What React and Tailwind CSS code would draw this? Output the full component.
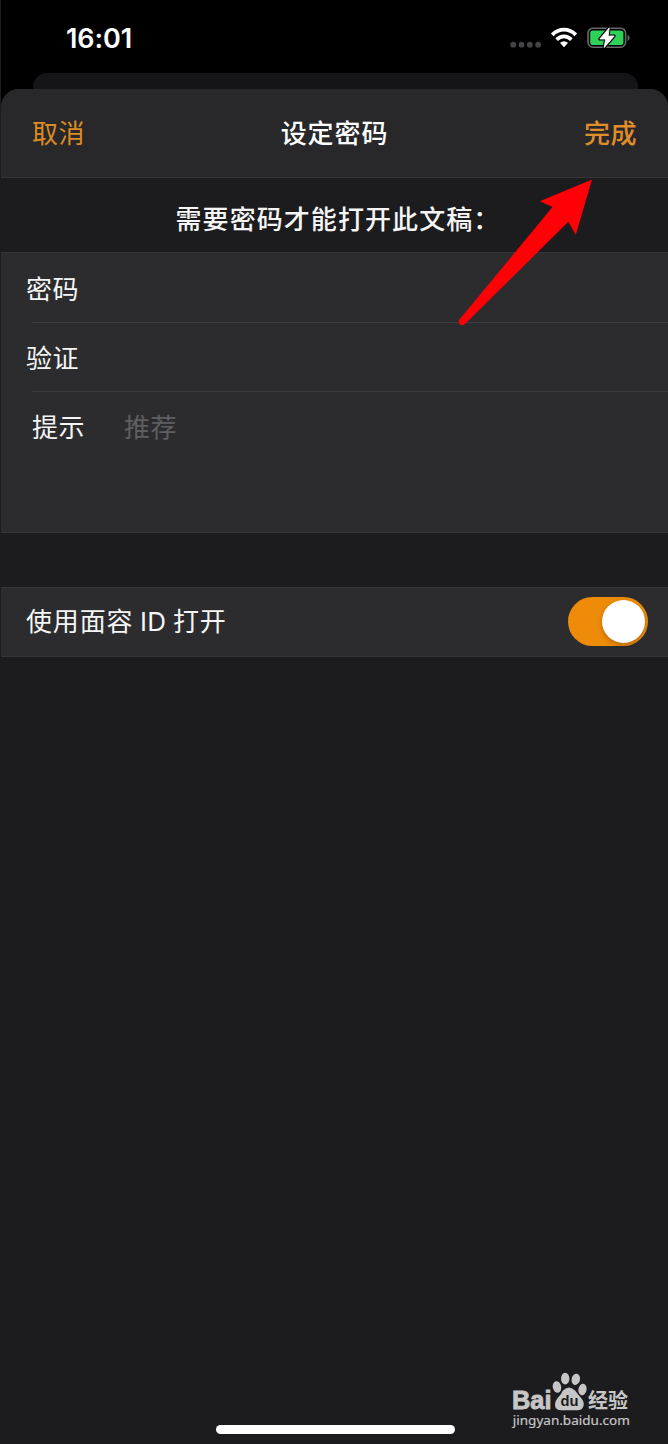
import React from 'react';

function StatusBar() {
  return (
    <div className="relative flex h-[73px] shrink-0 items-start justify-between pl-[65px] pr-[38px]">
      <div className="mt-[23px] font-['Inter',sans-serif] text-[27px] leading-8 font-semibold tracking-[-0.1px] text-white">16:01</div>
      <svg className="mt-6 h-7 w-[122px]" viewBox="508 24 122 28" fill="none">
        <g fill="#444446">
          <circle cx="513.2" cy="44.7" r="2.9" />
          <circle cx="521.5" cy="44.7" r="2.9" />
          <circle cx="529.8" cy="44.7" r="2.9" />
          <circle cx="538.1" cy="44.7" r="2.9" />
        </g>
        <path d="M552.2 34.8C559 28 569 28 575.8 34.8" stroke="#fff" strokeWidth="3.8" />
        <path d="M556.6 39.6C561 35.2 567 35.2 571.4 39.6" stroke="#fff" strokeWidth="3.7" />
        <path d="M560 42.8Q564 39.8 568 42.8L564.8 46.6Q564 47.4 563.2 46.6Z" fill="#fff" />
        <rect x="588" y="28.2" width="37.6" height="19" rx="5" stroke="#69696b" strokeWidth="1.6" />
        <rect x="590.2" y="30.4" width="33.2" height="14.6" rx="2.8" fill="#30d158" />
        <path d="M627.6 34.7Q629.6 35.5 629.6 37.8Q629.6 40.1 627.6 40.9Z" fill="#69696b" />
        <path d="M609.2 27.8L599.8 39H605.6L604.2 47.6L614.2 36H608.2Z" fill="#fff" stroke="#000" strokeWidth="3" strokeLinejoin="round" />
        <path d="M609.2 27.8L599.8 39H605.6L604.2 47.6L614.2 36H608.2Z" fill="#fff" stroke="#fff" strokeWidth="0.8" strokeLinejoin="round" />
      </svg>
    </div>
  );
}

function Row({ label }) {
  return (
    <div className="flex h-[69px] flex-col pl-[25px]">
      <div className="flex h-[68px] items-center">{label}</div>
      <div className="ml-1.5 h-px bg-[#3c3c3e]" />
    </div>
  );
}

function Toggle() {
  return (
    <button role="switch" aria-checked="true" aria-label="使用面容 ID 打开" className="mb-px flex h-[49px] w-[80px] items-center justify-end rounded-full bg-[#ee8c0a] pr-[3px]">
      <span className="size-[43px] rounded-full bg-white shadow-[0_2px_5px_rgba(0,0,0,0.25)]" />
    </button>
  );
}

function Watermark() {
  return (
    <div className="absolute top-[1370px] left-[509px] h-[62px] w-[124px]">
      <svg className="size-full" viewBox="510 1370 124 62" fill="#c6c6c7">
        <text x="512" y="1409" fontFamily="Liberation Sans, sans-serif" fontSize="26.5" fontWeight="700" textLength="39.5" lengthAdjust="spacingAndGlyphs" letterSpacing="0" stroke="#c6c6c7" strokeWidth="0.9">Bai</text>
        <ellipse cx="557" cy="1387" rx="4.2" ry="5.8" transform="rotate(-12 557 1387)" />
        <ellipse cx="565.2" cy="1378.7" rx="4.2" ry="5.9" />
        <ellipse cx="575.8" cy="1379.3" rx="4.2" ry="5.7" transform="rotate(12 575.8 1379.3)" />
        <ellipse cx="582.5" cy="1389.5" rx="4.1" ry="5.8" transform="rotate(10 582.5 1389.5)" />
        <path d="M562.5 1391Q569 1384 575.5 1391Q577.5 1394 581.5 1398.5Q584.5 1402 583.5 1406Q582.5 1410.3 577 1410.2H561Q555.7 1410.2 555 1405.5Q554.5 1401.5 558.5 1397Q561.5 1394 562.5 1391Z" />
        <text x="560.5" y="1406.4" fill="#1c1c1e" fontFamily="Liberation Sans, sans-serif" fontSize="15.5" fontWeight="700" textLength="18" lengthAdjust="spacingAndGlyphs" letterSpacing="0">du</text>
        <text x="588" y="1408.2" fontFamily="Noto Sans CJK SC, sans-serif" fontSize="20.5" fontWeight="700" textLength="40" lengthAdjust="spacingAndGlyphs" letterSpacing="0">经验</text>
        <text x="512.8" y="1424.5" fontFamily="Noto Sans, sans-serif" fontSize="13.4" fontWeight="400" textLength="117" lengthAdjust="spacingAndGlyphs" letterSpacing="0" stroke="#c6c6c7" strokeWidth="0.2">jingyan.baidu.com</text>
      </svg>
    </div>
  );
}

export default function App() {
  return (
    <div className="relative flex h-[1444px] w-[668px] flex-col overflow-hidden border-l border-[#1c1c1e] bg-black font-['Noto_Sans_CJK_SC',sans-serif] text-[26px] leading-[38px] tracking-[0.5px] text-[#f5f5f5]">
      <StatusBar />
      <div className="mr-[30px] ml-8 h-4 shrink-0 rounded-t-[14px] bg-[#151517]" />
      <main className="flex flex-1 flex-col overflow-hidden rounded-t-[18px] bg-[#1c1c1e]">
        <header className="grid h-[89px] shrink-0 grid-cols-3 items-center border-b border-[#363638] bg-[#28282a] px-[31px] pb-0.5">
          <button className="text-left text-[#dc8a26]">取消</button>
          <h1 className="text-center font-medium tracking-[0.9px] whitespace-nowrap text-white">设定密码</h1>
          <button className="text-right font-medium text-[#e08d2b]">完成</button>
        </header>
        <h2 className="flex h-[74px] shrink-0 items-center pt-1.5 pl-[174.5px] font-medium tracking-[1.07px] whitespace-nowrap">需要密码才能打开此文稿：</h2>
        <section className="h-[281px] shrink-0 border-y border-[#363638] bg-[#2c2c2e] pt-px">
          <Row label="密码" />
          <Row label="验证" />
          <div className="flex h-[68px] items-center pl-[31px]">
            <span>提示</span>
            <span className="ml-[39px] text-[#5f5f63]">推荐</span>
          </div>
        </section>
        <section className="mt-[54px] flex h-[70px] shrink-0 items-center justify-between border-y border-[#363638] bg-[#2c2c2e] pr-5 pl-[25px]">
          <span className="pb-0.5 tracking-[0.85px]">使用面容 <span className="font-['Inter',sans-serif] tracking-[0.2px]">ID</span> 打开</span>
          <Toggle />
        </section>
      </main>
      <svg className="absolute top-[170px] left-[449px] h-[165px] w-[150px]" viewBox="450 170 150 165" aria-hidden="true">
        <path d="M592 179.5L539.8 201.3L552.5 207L459.3 319.8Q457.8 322.6 460 324.5Q462.3 326.2 465 324L568.3 221.8L575.8 234.8Z" fill="#ff0007" />
      </svg>
      <div className="absolute top-[1425px] left-[215px] h-[9px] w-[239px] rounded-full bg-white" />
      <Watermark />
    </div>
  );
}
